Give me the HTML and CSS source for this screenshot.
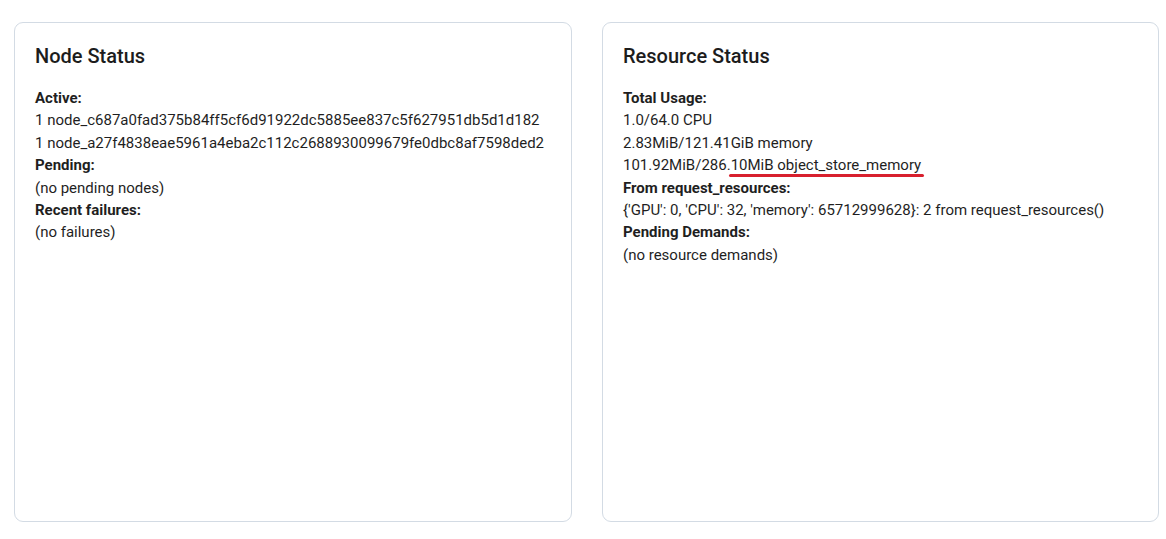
FILE: index.html
```html
<!DOCTYPE html>
<html>
<head>
<meta charset="utf-8">
<link rel="stylesheet" href="styles.css">
</head>
<body>
<div class="grid">
  <section class="card">
    <h2 class="title">Node Status</h2>
    <div class="body">
      <div class="label">Active:</div>
      <div>1 node_c687a0fad375b84ff5cf6d91922dc5885ee837c5f627951db5d1d182</div>
      <div>1 node_a27f4838eae5961a4eba2c112c2688930099679fe0dbc8af7598ded2</div>
      <div class="label">Pending:</div>
      <div>(no pending nodes)</div>
      <div class="label">Recent failures:</div>
      <div>(no failures)</div>
    </div>
  </section>
  <section class="card">
    <h2 class="title">Resource Status</h2>
    <div class="body">
      <div class="label">Total Usage:</div>
      <div>1.0/64.0 CPU</div>
      <div>2.83MiB/121.41GiB memory</div>
      <div>101.92MiB/286.<span class="mark">10MiB object_store_memory</span></div>
      <div class="label">From request_resources:</div>
      <div>{'GPU': 0, 'CPU': 32, 'memory': 65712999628}: 2 from request_resources()</div>
      <div class="label">Pending Demands:</div>
      <div>(no resource demands)</div>
    </div>
  </section>
</div>
</body>
</html>
```
FILE: styles.css
```css
html, body {
  margin: 0;
  padding: 0;
  background: #ffffff;
}
body {
  font-family: Roboto, "Liberation Sans", sans-serif;
  color: #1f1f1f;
}
.grid {
  display: grid;
  grid-template-columns: 558px 557px;
  column-gap: 30px;
  padding: 22px 8px 0 14px;
}
.card {
  box-sizing: border-box;
  height: 500px;
  border: 1px solid #d3dbe4;
  border-radius: 9px;
  padding: 20px 20px;
}
.title {
  margin: 0 0 18px 0;
  font-size: 20px;
  font-weight: 500;
  line-height: 26px;
  color: #1c1c1c;
}
.body {
  font-size: 15px;
  line-height: 22.4px;
}
.label {
  font-weight: 700;
}
.mark {
  position: relative;
}
.mark::after {
  content: "";
  position: absolute;
  left: -2px;
  right: -3px;
  bottom: -3px;
  height: 3px;
  border-radius: 2px;
  background: #d8202e;
}
```
